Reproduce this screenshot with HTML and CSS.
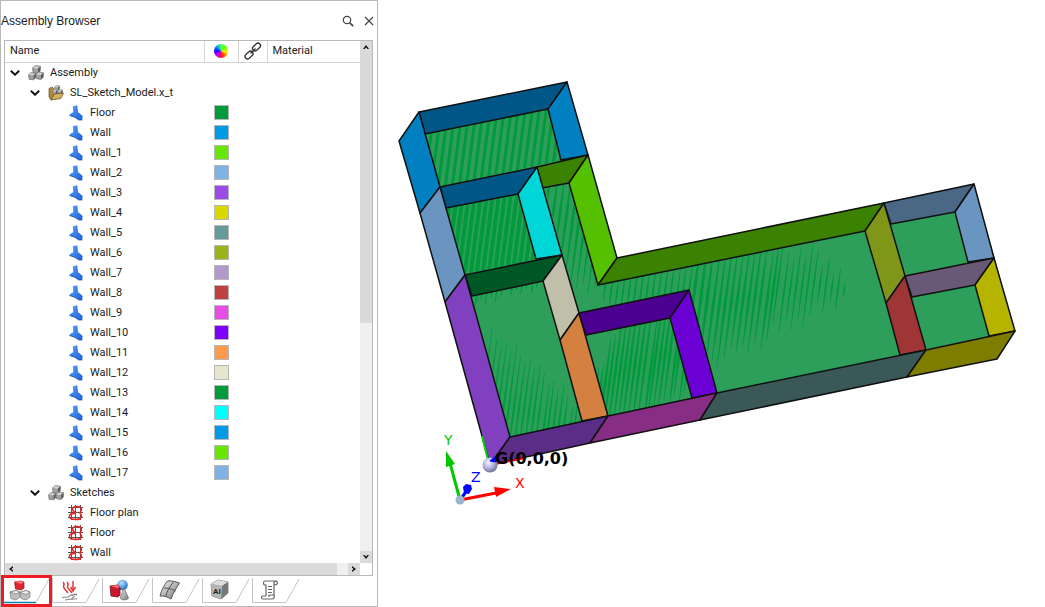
FILE: index.html
```html
<!DOCTYPE html>
<html lang="en">
<head>
<meta charset="utf-8">
<title>Assembly Browser</title>
<link rel="stylesheet" href="styles.css">
</head>
<body>
<svg class="defs" aria-hidden="true">
  <defs>
    <linearGradient id="gBlue" x1="0" y1="0" x2="1" y2="1"><stop offset="0" stop-color="#5aa0ff"/><stop offset="1" stop-color="#1a62dc"/></linearGradient>
    <linearGradient id="gGrey" x1="0" y1="0" x2="1" y2="1"><stop offset="0" stop-color="#f4f4f4"/><stop offset="1" stop-color="#757575"/></linearGradient>
    <radialGradient id="gBall" cx=".4" cy=".3" r=".7"><stop offset="0" stop-color="#b8e0ff"/><stop offset="1" stop-color="#1f70c8"/></radialGradient>
    <radialGradient id="gOrigin" cx=".4" cy=".35" r=".7"><stop offset="0" stop-color="#f4f4ff"/><stop offset=".5" stop-color="#b4b4e4"/><stop offset="1" stop-color="#66668c"/></radialGradient>
    <symbol id="cube" viewBox="0 0 8 8">
      <path d="M0.5 2.5 5 3v4.6L1 6.8Z" fill="#a0a0a0"/><path d="M0.5 2.5 3 .5l4.5.6L5 3Z" fill="#cfcfcf"/><path d="M5 3 7.500 1.100 7.300 5.500 5 7.600Z" fill="#5c5c5c"/>
      <path d="M.5 2.5 3 .5l4.500.600L7.300 5.500 5 7.600 1 6.800Z" fill="none" stroke="#666" stroke-width=".6"/>
    </symbol>
    <symbol id="cubes" viewBox="0 0 16 16">
      <use href="#cube" x="4" y="0" width="9" height="9"/><use href="#cube" x="0" y="7" width="8.500" height="8.500"/><use href="#cube" x="7.500" y="6.500" width="8.500" height="8.500"/>
    </symbol>
    <symbol id="folder" viewBox="0 0 16 16">
      <path d="M1 3.500 4 2l1.500 1.500V13L3 15 1 12Z" fill="#b0893c" stroke="#695021" stroke-width=".7"/>
      <use href="#cube" x="6" y="0" width="6" height="6"/><use href="#cube" x="4" y="4" width="6" height="6"/><use href="#cube" x="9" y="4" width="6" height="6"/>
      <path d="M3 15 6 9l9.500-1-2.800 5.500Z" fill="#d3b15c" stroke="#695021" stroke-width=".8"/>
    </symbol>
    <symbol id="part" viewBox="0 0 16 16">
      <path d="M4.800 1.200 8.800.400 9.600 7.300 14.600 11.200 14.200 15 10.500 14.800 7 12.300 1.500 10.400 2 9 5.300 7.200Z" fill="url(#gBlue)"/>
      <path d="M1.500 10.500 7 12.300 10.500 14.800 14.200 15" fill="none" stroke="#0a3c96" stroke-width=".8"/>
      <path d="M8.800.400 9.600 7.300 14.600 11.200" fill="none" stroke="#1c4fa0" stroke-width=".6"/>
    </symbol>
    <symbol id="sketch" viewBox="0 0 16 16">
      <path d="M3.500 0v15M7.500 0v15M12.500 0v15M0 2.500h15M0 7.500h15M0 12.500h15" stroke="#555" fill="none"/>
      <path d="M4.500 4.500C4.500 2 6.500 1.500 9 1.500s4.500.500 4.500 3-1.500 2-1.500 3.500c0 1.200 2 1.500 1.500 3.500-.500 2.500-3 3-6 3-3.500 0-6-.500-6-3 0-2 2-3 4-3 1.500 0 2 .300 2-.700C7.500 6.500 4.500 7 4.500 4.500Z" stroke="#ee2020" stroke-width="1.500" fill="none"/>
    </symbol>
    <symbol id="chev" viewBox="0 0 10 6"><path d="M.800.800 5 4.800 9.200.800" fill="none" stroke="#111" stroke-width="1.900"/></symbol>
  </defs>
</svg>
<main class="app">
  <section class="panel" aria-label="Assembly Browser">
    <header class="title">
      <h1>Assembly Browser</h1>
      <button class="tool" aria-label="Search"><svg width="12" height="12" viewBox="0 0 12 12"><circle cx="5" cy="5" r="3.700" fill="none" stroke="#444" stroke-width="1.200"/><path d="m7.800 7.800 3.400 3.400" stroke="#444" stroke-width="1.700"/></svg></button>
      <button class="tool" aria-label="Close"><svg width="10" height="10" viewBox="0 0 10 10"><path d="m1 1 8 8M9 1 1 9" stroke="#444" stroke-width="1.200"/></svg></button>
    </header>
    <div class="browser">
      <div class="scroller">
        <table class="tree">
          <colgroup><col class="c-name"><col class="c-color"><col class="c-link"><col></colgroup>
          <thead><tr>
            <th>Name</th>
            <th class="mid" aria-label="Color"><span class="wheel"></span></th>
            <th class="mid" aria-label="Link"><svg width="18" height="18" viewBox="0 0 18 18"><g fill="none" stroke="#333" stroke-width="1.300"><rect x="-4.500" y="-2.500" width="9" height="5" rx="2.500" transform="translate(12.500 5) rotate(-42)"/><rect x="-4.500" y="-2.500" width="9" height="5" rx="2.500" transform="translate(5 13) rotate(-42)"/><path d="m6.500 11.500 5-5"/></g></svg></th>
            <th>Material</th>
          </tr></thead>
          <tbody>
            <tr><td colspan="4"><div class="node l0"><button class="twist" aria-label="Collapse Assembly"><svg><use href="#chev"/></svg></button><svg class="ico"><use href="#cubes"/></svg>Assembly</div></td></tr>
            <tr><td colspan="4"><div class="node l1"><button class="twist" aria-label="Collapse SL_Sketch_Model.x_t"><svg><use href="#chev"/></svg></button><svg class="ico"><use href="#folder"/></svg>SL_Sketch_Model.x_t</div></td></tr>
            <tr><td><div class="node l2"><svg class="ico"><use href="#part"/></svg>Floor</div></td><td class="mid"><i class="sw green"></i></td><td></td><td></td></tr>
            <tr><td><div class="node l2"><svg class="ico"><use href="#part"/></svg>Wall</div></td><td class="mid"><i class="sw azure"></i></td><td></td><td></td></tr>
            <tr><td><div class="node l2"><svg class="ico"><use href="#part"/></svg>Wall_1</div></td><td class="mid"><i class="sw lime"></i></td><td></td><td></td></tr>
            <tr><td><div class="node l2"><svg class="ico"><use href="#part"/></svg>Wall_2</div></td><td class="mid"><i class="sw sky"></i></td><td></td><td></td></tr>
            <tr><td><div class="node l2"><svg class="ico"><use href="#part"/></svg>Wall_3</div></td><td class="mid"><i class="sw purple"></i></td><td></td><td></td></tr>
            <tr><td><div class="node l2"><svg class="ico"><use href="#part"/></svg>Wall_4</div></td><td class="mid"><i class="sw yellow"></i></td><td></td><td></td></tr>
            <tr><td><div class="node l2"><svg class="ico"><use href="#part"/></svg>Wall_5</div></td><td class="mid"><i class="sw slate"></i></td><td></td><td></td></tr>
            <tr><td><div class="node l2"><svg class="ico"><use href="#part"/></svg>Wall_6</div></td><td class="mid"><i class="sw olive"></i></td><td></td><td></td></tr>
            <tr><td><div class="node l2"><svg class="ico"><use href="#part"/></svg>Wall_7</div></td><td class="mid"><i class="sw mauve"></i></td><td></td><td></td></tr>
            <tr><td><div class="node l2"><svg class="ico"><use href="#part"/></svg>Wall_8</div></td><td class="mid"><i class="sw red"></i></td><td></td><td></td></tr>
            <tr><td><div class="node l2"><svg class="ico"><use href="#part"/></svg>Wall_9</div></td><td class="mid"><i class="sw pink"></i></td><td></td><td></td></tr>
            <tr><td><div class="node l2"><svg class="ico"><use href="#part"/></svg>Wall_10</div></td><td class="mid"><i class="sw violet"></i></td><td></td><td></td></tr>
            <tr><td><div class="node l2"><svg class="ico"><use href="#part"/></svg>Wall_11</div></td><td class="mid"><i class="sw orange"></i></td><td></td><td></td></tr>
            <tr><td><div class="node l2"><svg class="ico"><use href="#part"/></svg>Wall_12</div></td><td class="mid"><i class="sw beige"></i></td><td></td><td></td></tr>
            <tr><td><div class="node l2"><svg class="ico"><use href="#part"/></svg>Wall_13</div></td><td class="mid"><i class="sw green"></i></td><td></td><td></td></tr>
            <tr><td><div class="node l2"><svg class="ico"><use href="#part"/></svg>Wall_14</div></td><td class="mid"><i class="sw cyan"></i></td><td></td><td></td></tr>
            <tr><td><div class="node l2"><svg class="ico"><use href="#part"/></svg>Wall_15</div></td><td class="mid"><i class="sw azure"></i></td><td></td><td></td></tr>
            <tr><td><div class="node l2"><svg class="ico"><use href="#part"/></svg>Wall_16</div></td><td class="mid"><i class="sw lime"></i></td><td></td><td></td></tr>
            <tr><td><div class="node l2"><svg class="ico"><use href="#part"/></svg>Wall_17</div></td><td class="mid"><i class="sw sky"></i></td><td></td><td></td></tr>
            <tr><td colspan="4"><div class="node l1"><button class="twist" aria-label="Collapse Sketches"><svg><use href="#chev"/></svg></button><svg class="ico"><use href="#cubes"/></svg>Sketches</div></td></tr>
            <tr><td colspan="4"><div class="node l2"><svg class="ico"><use href="#sketch"/></svg>Floor plan</div></td></tr>
            <tr><td colspan="4"><div class="node l2"><svg class="ico"><use href="#sketch"/></svg>Floor</div></td></tr>
            <tr><td colspan="4"><div class="node l2"><svg class="ico"><use href="#sketch"/></svg>Wall</div></td></tr>
          </tbody>
        </table>
      </div>
      <div class="vbar">
        <button class="arrow thumb" aria-label="Scroll up"><svg width="6" height="4" viewBox="0 0 6 4"><path d="M0 4 3 0l3 4H4.500L3 2.500 1.500 4Z"/></svg></button>
        <div class="thumb vthumb"></div>
        <div class="vtrack"></div>
        <button class="arrow thumb" aria-label="Scroll down"><svg width="6" height="4" viewBox="0 0 6 4"><path d="M0 0h1.500L3 1.500 4.500 0H6L3 4Z"/></svg></button>
      </div>
      <div class="hbar">
        <button class="arrow thumb" aria-label="Scroll left"><svg width="4" height="6" viewBox="0 0 4 6"><path d="M4 0 0 3l4 3V4.500L2.500 3 4 1.500Z"/></svg></button>
        <div class="thumb hthumb"></div>
        <div class="htrack"></div>
        <button class="arrow thumb" aria-label="Scroll right"><svg width="4" height="6" viewBox="0 0 4 6"><path d="m0 0 4 3-4 3V4.500L1.500 3 0 1.500Z"/></svg></button>
        <div class="corner"></div>
      </div>
    </div>
    <nav class="tabs">
      <button class="tab active" aria-label="Assembly"><svg viewBox="0 0 50 26"><path d="M34 24.500 47 1" class="edge"/><path d="M1 24.500h33" stroke="#0d84ad" stroke-width="1.500"/>
        <g stroke="#777" stroke-width=".7" stroke-linejoin="round"><path d="m12.500 4 6-1 3.500 1v6l-2.500 2-6-1Z" fill="#dd2633" stroke="#8d1520"/><path d="m12.500 4 6-1 3.500 1-3 2Z" fill="#ff7078" stroke="none"/>
        <path d="m8 14 6-1.500 4 1.500v5l-4 3-5-1.500Z" fill="#bfbfbf"/><path d="m8 14 6-1.500 4 1.500-4 2Z" fill="#eee"/><path d="m18 14.500 6-2 4 1.500v5l-4 3-5-1.500Z" fill="#bfbfbf"/><path d="m18 14.500 6-2 4 1.500-4 2.500Z" fill="#eee"/></g></svg></button>
      <button class="tab" aria-label="Loads"><svg viewBox="0 0 50 26"><path d="M.5 0v24.500H34L47 1" class="edge"/><g fill="none" stroke="#e03a3a" stroke-width="1.500"><path d="M11 4c3 3-1 4 1 6l4 5M15 4c3 3-1 4 1 6l4 5M21 3v9"/><path d="m18.500 9 2.500 4 2.500-4"/></g><path d="m10 19.500 6-.5 3-2 6-1M13 22l6-1c2 0 2-3 4-3M20 18c1-2 3-2 5-1M19 21c2 1 3-1 6 0" fill="none" stroke="#888" stroke-width="1.200"/></svg></button>
      <button class="tab" aria-label="Geometry"><svg viewBox="0 0 50 26"><path d="M.5 0v24.500H34L47 1" class="edge"/><circle cx="20.500" cy="7" r="5.300" fill="url(#gBall)"/><path d="m8 8 8-1 2 2v8l-2 2-7-1Z" fill="#c9182b" stroke="#7a101c" stroke-width=".8"/><path d="m8 8 8-1 2 2-3 1Z" fill="#ff6b6b"/><path d="m22 10 4.500 10c-1 2.500-7 2.500-8.500 0Z" fill="url(#gGrey)" stroke="#666" stroke-width=".7"/></svg></button>
      <button class="tab" aria-label="Mesh"><svg viewBox="0 0 50 26"><path d="M.5 0v24.500H34L47 1" class="edge"/><path d="M15.500 3c4-.500 8 .500 12 2-3 5-6 9-8.500 16-3-2-7-3.500-11-3 1.500-6 4-11 7.500-15Z" fill="url(#gGrey)" stroke="#555"/><path d="M21.500 4C18 8 15 13 13.500 19M12 10c4 0 8 1 11.500 3" fill="none" stroke="#555"/></svg></button>
      <button class="tab" aria-label="AI"><svg viewBox="0 0 50 26"><path d="M.5 0v24.500H34L47 1" class="edge"/><path d="m9 6 7-4 10 2v11l-7 6-9-3Z" fill="#989898" stroke="#666" stroke-width=".7"/><path d="m9 6 7-4 10 2-6 4Z" fill="#ddd"/><path d="m20 8 6-4v11l-7 6Z" fill="#777"/><path d="m9 6 11 2-1 13-9-3Z" fill="#b5b5b5"/><text x="11" y="16" class="ai">AI</text></svg></button>
      <button class="tab" aria-label="Report"><svg viewBox="0 0 50 26"><path d="M.5 0v24.500H34L47 1" class="edge"/><path d="M22 7V5c0-2.500 3.500-2.500 3.500 0 0 2-3.500 2-3.500 2Zm1.500-4H13c-2 0-2 4 0 4h1v11M22 7v10M14 18h-3c-2 0-2 3 0 3h9c3 0 3-4 1-4h-4v2M16 8.500h4M16 11.500h4M16 14.500h4" fill="none" stroke="#666" stroke-width="1.200"/></svg></button>
    </nav>
  </section>
  <section class="view" aria-label="Model view">
    <svg class="scene" viewBox="378 0 667 607" preserveAspectRatio="xMinYMin meet">
      <defs>
        <clipPath id="f1"><path d="M425 134 548 109 561 160 440 187Z"/></clipPath>
        <clipPath id="f2"><path d="M446 208 518 194 536 259 465 275Z"/></clipPath>
        <clipPath id="f3"><path d="M472 296 543 281 582 421 510 437Z"/></clipPath>
        <clipPath id="f4"><path d="M586 335 670 318 692 398 608 416Z"/></clipPath>
        <clipPath id="f5"><path d="M545 188 569 183 598 285 865 231 900 355 717 393 689 290 579 313Z"/></clipPath>
      </defs>
      <path d="M419 112 567 82 617 258 974 184 1015 331 510 437Z" class="floor"/>
      <g id="hatch"></g>
      <g class="walls">
        <path fill="#005787" d="M419 112 567 82 548 109 425 134Z"/>
        <path fill="#0080c0" d="M419 112 399 141 420 213 440 187Z"/>
        <path fill="#0080c0" d="M567 82 548 109 561 160 588 155Z"/>
        <path fill="#005787" d="M440 187 537 167 518 194 446 208Z"/>
        <path fill="#3a8200" d="M537 167 588 155 569 183 542 188Z"/>
        <path fill="#00d5d8" d="M537 167 518 194 536 259 562 255Z"/>
        <path fill="#55c000" d="M588 155 569 183 598 285 617 258Z"/>
        <path fill="#6a95c0" d="M440 187 420 213 445 302 465 275Z"/>
        <path fill="#005726" d="M465 275 562 255 543 281 472 296Z"/>
        <path fill="#8040c0" d="M465 275 445 302 490 465 510 437Z"/>
        <path fill="#c0bfaa" d="M562 255 543 281 560 340 579 313Z"/>
        <path fill="#d48040" d="M579 313 560 340 582 421 608 416Z"/>
        <path fill="#4b0090" d="M579 313 689 290 670 318 586 335Z"/>
        <path fill="#6a00d4" d="M689 290 670 318 692 398 717 393Z"/>
        <path fill="#3a8200" d="M617 258 884 203 865 231 598 285Z"/>
        <path fill="#809618" d="M884 203 865 231 886 303 905 276Z"/>
        <path fill="#a03535" d="M905 276 886 303 900 355 926 350Z"/>
        <path fill="#4a6785" d="M884 203 974 184 955 212 891 224Z"/>
        <path fill="#6a95c0" d="M974 184 955 212 968 262 994 258Z"/>
        <path fill="#6a5877" d="M905 276 994 258 975 285 912 297Z"/>
        <path fill="#b6b400" d="M994 258 975 285 989 336 1015 331Z"/>
        <path fill="#5a2d87" d="M510 437 608 416 590 443 490 465Z"/>
        <path fill="#872d83" d="M608 416 717 393 700 420 590 443Z"/>
        <path fill="#3a5858" d="M717 393 926 350 907 377 700 420Z"/>
        <path fill="#7d7d00" d="M926 350 1015 331 997 359 907 377Z"/>
      </g>
      <path d="m482 436 6 24" stroke="#00d800" stroke-width="2"/>
      <path d="m490 465 35-7" stroke="#f00" stroke-width="2"/>
      <circle cx="490" cy="465" r="7.500" fill="url(#gOrigin)"/>
      <path d="m490 461 6-5v6Z" fill="#00f" stroke="#00f"/>
      <text x="495" y="464" class="origin">G(0,0,0)</text>
      <path d="m460 500-10-37" stroke="#00c800" stroke-width="3"/><path d="m446 451 9 13-9 3Z" fill="#00c800"/>
      <path d="m460 500 36-7" stroke="#f00" stroke-width="3"/><path d="m494 487 17 2-15 8Z" fill="#f00"/>
      <path d="m460 500 8-11" stroke="#00f" stroke-width="3"/><path d="m463 487 3-3 5 1 1 4-3 5-5-1Z" fill="#00f"/>
      <circle cx="460" cy="500" r="4.500" fill="#9ab4cc"/>
      <text x="444" y="445" class="axis" fill="#00c800">Y</text>
      <text x="471" y="482" class="axis" fill="#00f">Z</text>
      <text x="515" y="488" class="axis" fill="#f00">X</text>
    </svg>
  </section>
</main>
<script src="hatch.js"></script>
</body>
</html>
```

FILE: hatch.js
```js
// Draws the leaning stripes on each floor area; the top and bottom limits are
// lists of [x, y] points, joined by straight lines.
const areas = [
  { clip: "f1", from: 422, to: 575, step: 7, width: 3, jitter: 0, top: [[400, 100]], bottom: [[400, 200]] },
  { clip: "f2", from: 440, to: 552, step: 6, width: 4, jitter: 0, top: [[400, 180]], bottom: [[400, 285]] },
  { clip: "f3", from: 472, to: 545, step: 5, width: 2, jitter: 9, top: [[472, 280]], bottom: [[472, 306], [500, 297], [545, 286]] },
  { clip: "f3", from: 484, to: 590, step: 5, width: 2, jitter: 12, top: [[484, 335], [530, 365], [555, 388], [590, 420]], bottom: [[484, 460]] },
  { clip: "f4", from: 590, to: 700, step: 5, width: 3, jitter: 18, top: [[590, 380], [610, 330], [630, 305]], bottom: [[590, 425], [650, 425], [672, 405], [695, 390]] },
  { clip: "f5", from: 548, to: 605, step: 6, width: 3, jitter: 14, top: [[548, 170]], bottom: [[548, 230], [575, 285], [605, 295]] },
  { clip: "f5", from: 605, to: 712, step: 6, width: 2, jitter: 8, top: [[605, 278], [650, 268], [712, 255]], bottom: [[605, 305], [712, 330]] },
  { clip: "f5", from: 695, to: 778, step: 6, width: 3, jitter: 14, top: [[695, 252], [778, 245]], bottom: [[695, 335], [715, 365], [778, 338]] },
  { clip: "f5", from: 778, to: 845, step: 6, width: 2, jitter: 18, top: [[778, 252], [815, 250], [845, 285]], bottom: [[778, 333], [845, 300]] }
];

function at(points, x) {
  for (let i = 1; i < points.length; i++) {
    const [x0, y0] = points[i - 1];
    const [x1, y1] = points[i];
    if (x <= x1) return y0 + (y1 - y0) * (x - x0) / (x1 - x0);
  }
  return points[points.length - 1][1];
}

const hatch = document.getElementById("hatch");
for (const a of areas) {
  let d = "";
  let n = 0;
  for (let x = a.from; x < a.to; x += a.step) {
    const shift = ((n * 7) % 5 - 2) / 4 * a.jitter;
    const t = at(a.top, x) + shift;
    const b = at(a.bottom, x) + ((n * 11) % 7 - 3) / 6 * a.jitter;
    n++;
    if (b <= t) continue;
    const lean = (b - t) * 0.13;
    const w = a.width / 2;
    const m = (t + b) / 2;
    const tip = a.jitter ? 0.3 : w;
    d += `M${x + lean / 2 - tip} ${t}L${x + lean / 2 + tip} ${t}L${x + w} ${m}L${x - lean / 2 + tip} ${b}L${x - lean / 2 - tip} ${b}L${x - w} ${m}Z`;
  }
  const p = document.createElementNS("http://www.w3.org/2000/svg", "path");
  p.setAttribute("d", d);
  p.setAttribute("clip-path", `url(#${a.clip})`);
  hatch.append(p);
}
```

FILE: styles.css
```css
* { box-sizing: border-box; }
body { margin: 0; background: #fff; color: #1a1a1a; font: 11px/20px Roboto, "Liberation Sans", sans-serif; }
button { padding: 0; border: 0; background: none; color: inherit; font: inherit; }
svg { display: block; }
.defs { position: absolute; width: 0; height: 0; }
.app { display: flex; min-height: 100vh; }
.panel { display: flex; flex-direction: column; flex: 0 0 378px; border: 1px solid #b9b9b9; }
.title { display: flex; align-items: center; height: 39px; gap: 9px; padding-right: 2px; }
.title h1 { flex: 1; margin: 0; font: 12px/20px "Liberation Sans", Arial, sans-serif; }
.tool { display: grid; place-items: center; width: 12px; height: 20px; }

.browser { display: grid; grid-template-columns: 1fr 12px; grid-template-rows: 1fr 12px; flex: 1; margin: 0 4px 0 3px; border: 1px solid #b9b9b9; }
.scroller { overflow: hidden; }
.tree { width: 100%; table-layout: fixed; border-collapse: collapse; }
.c-name { width: 199px; }
.c-color { width: 34px; }
.c-link { width: 29px; }
.tree th { height: 21px; padding: 0 5px; border-bottom: 1px solid #d4d4d4; border-left: 1px solid #d4d4d4; font-weight: 400; line-height: 18px; text-align: left; }
.tree th:first-child { border-left: 0; }
.tree td { height: 20px; padding: 0; }
.tree .mid { padding: 0; }
.tree .mid > * { display: block; margin: 0 auto; }
.tree .wheel { width: 14px; height: 14px; border-radius: 50%; background: conic-gradient(#5f5, #6f0 50deg, #fe0 100deg, #f50 145deg, #f05 185deg, #c0f 225deg, #20f 270deg, #09f 315deg, #5f5); }
.node { display: flex; align-items: center; height: 20px; white-space: nowrap; }
.l0 { padding-left: 5px; }
.l1 { padding-left: 25px; }
.l2 { padding-left: 63px; }
.twist { width: 10px; margin-right: 8px; }
.twist svg { width: 10px; height: 6px; }
.ico { width: 16px; height: 16px; margin-right: 6px; }
.sw { width: 15px; height: 15px; border: 1px solid #b8b8b8; }
.green { background: #009a3c; }
.azure { background: #0099e6; }
.lime { background: #66e600; }
.sky { background: #7fb2e5; }
.purple { background: #994de6; }
.yellow { background: #d9d900; }
.slate { background: #669999; }
.olive { background: #99b31a; }
.mauve { background: #b199cc; }
.red { background: #bf4040; }
.pink { background: #e64de6; }
.violet { background: #7f00ff; }
.orange { background: #ff994d; }
.beige { background: #e6e6cc; }
.cyan { background: #00ffff; }

.thumb { background: #dadada; }
.arrow { display: grid; place-items: center; width: 12px; height: 12px; fill: #111; }
.vbar { display: flex; flex-direction: column; background: #f0f0f0; }
.vthumb { flex: 270; }
.vtrack { flex: 228; }
.hbar { display: flex; grid-column: 1 / -1; background: #f0f0f0; }
.hthumb { flex: 320; }
.htrack { flex: 11; }
.corner { width: 12px; background: #fff; }

.tabs { display: flex; height: 30px; padding: 2px 0 0 1px; }
.tab { position: relative; width: 50px; height: 26px; }
.tab svg { width: 50px; height: 26px; }
.edge { fill: none; stroke: #c4c4c4; }
.active::after { content: ""; position: absolute; inset: -3px 0 -3px -1px; border: 3px solid #ed1c24; }
.ai { font: bold 8px Roboto, sans-serif; fill: #222; }

.view { flex: 1; min-width: 0; }
.scene { width: 100%; }
.floor { fill: #2e9f5b; }
#hatch { fill: #009a3c; }
.walls { stroke: #111; stroke-width: 1.5px; stroke-linejoin: round; }
.origin { font: bold 16px "DejaVu Sans", sans-serif; fill: #000; }
.axis { font: 14px "DejaVu Sans", sans-serif; }
```
